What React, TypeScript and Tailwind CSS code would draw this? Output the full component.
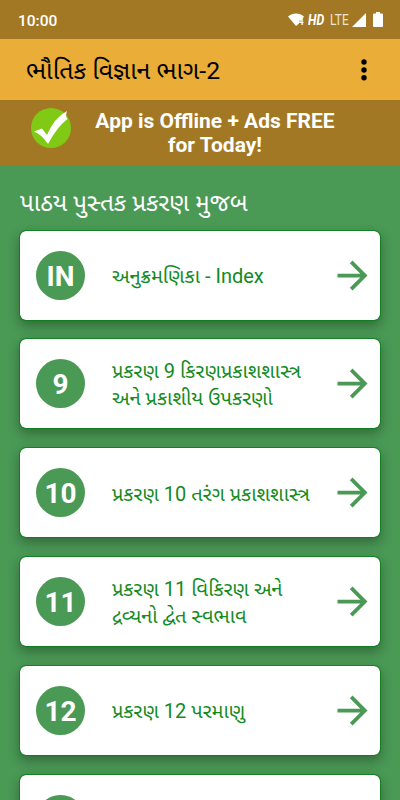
const chapters = [
  { badge: "IN", lines: ["અનુક્રમણિકા - Index"] },
  { badge: "9", lines: ["પ્રકરણ 9 કિરણપ્રકાશશાસ્ત્ર", "અને પ્રકાશીય ઉપકરણો"] },
  { badge: "10", lines: ["પ્રકરણ 10 તરંગ પ્રકાશશાસ્ત્ર"] },
  { badge: "11", lines: ["પ્રકરણ 11 વિકિરણ અને", "દ્રવ્યનો દ્વેત સ્વભાવ"] },
  { badge: "12", lines: ["પ્રકરણ 12 પરમાણુ"] },
  { badge: "", lines: [] },
];

function StatusBar() {
  return (
    <div className="flex h-[39px] shrink-0 items-center justify-between bg-[#a27824] pl-[18px] pr-[17px] text-white">
      <span className="pt-[2px] text-[15.5px] font-medium leading-5">10:00</span>
      <div className="flex items-center">
        <svg className="h-[14px] w-[17px]" viewBox="0 0 17 14">
          <path d="M0 3.4C4.700-.5 11.500-.5 16 3.400l-1 1.600-4 3v2.500L8 13z" fill="currentColor" />
          <text x="10.800" y="11.500" fontSize="8.500" fontWeight="700" fill="currentColor">4</text>
        </svg>
        <span className="ml-[3px] inline-block w-4 text-[14px] font-bold italic leading-4 [transform-origin:left] [transform:scaleX(0.88)]">
          HD
        </span>
        <span className="ml-[6px] inline-block w-[20px] text-[14px] leading-4 text-[#eee5d5] [transform-origin:left] [transform:scaleX(0.85)]">
          LTE
        </span>
        <svg className="ml-[2px] h-[14px] w-[14px]" viewBox="0 0 14 14">
          <path d="M14 0v14H0z" fill="currentColor" />
        </svg>
        <svg className="ml-[7px] h-[15px] w-[10px]" viewBox="0 0 10 15">
          <path d="M3 0h4v1.500h2q1 0 1 1V14q0 1-1 1H1q-1 0-1-1V2.500q0-1 1-1h2z" fill="currentColor" />
        </svg>
      </div>
    </div>
  );
}

export default function App() {
  return (
    <div className="flex h-[800px] w-[400px] flex-col overflow-hidden bg-[#4a9955] font-['Roboto','Noto_Sans_Gujarati','Noto_Sans',sans-serif]">
      <StatusBar />

      {/* App bar */}
      <header className="flex h-[61px] shrink-0 items-center justify-between bg-[#eaad38] pl-[26px] pr-[33px] text-black">
        <h1 className="mt-[2px] whitespace-nowrap text-[24.8px] leading-8">ભૌતિક વિજ્ઞાન ભાગ-2</h1>
        <svg className="h-[22px] w-[6px]" viewBox="0 0 6 22">
          <circle cx="3" cy="3" r="2.7" />
          <circle cx="3" cy="11" r="2.7" />
          <circle cx="3" cy="18.700" r="2.7" />
        </svg>
      </header>

      {/* Offer banner */}
      <section className="flex h-[65px] shrink-0 bg-[#a27824] pl-[31px] pt-2">
        <svg className="h-10 w-10" viewBox="0 0 40 40">
          <circle cx="20" cy="20" r="20" fill="#80c915" />
          <path d="M3 23.500 11 20.500l5 6.500Q23 10 36 3q-2 5 .5 8Q26 19 17 36 10 26 3 23.500z" fill="#fff" />
        </svg>
        <p className="ml-[24px] mt-[1px] w-[240px] whitespace-nowrap text-center text-[21px] font-bold leading-6 text-white">
          App is Offline + Ads FREE
          <br />
          for Today!
        </p>
      </section>

      {/* Chapter list */}
      <main className="px-[19px] pt-5">
        <h2 className="h-[44.7px] whitespace-nowrap pl-px text-[24.300px] leading-[35px] text-white">
          પાઠય પુસ્તક પ્રકરણ મુજબ
        </h2>
        <div className="flex flex-col gap-[17.8px]">
          {chapters.map((chapter, i) => (
            <div
              key={i}
              className="flex h-[91px] items-center rounded-[7px] border border-[#087f18]/80 bg-white bg-clip-padding pl-4 pr-[5px] shadow-[0_5px_12px_rgba(0,0,0,0.3)]"
            >
              <div className="flex h-[49px] w-[49px] shrink-0 items-center justify-center rounded-full bg-[#4a9955] pt-[3px] text-[28px] font-bold text-white">
                {chapter.badge}
              </div>
              <div className="ml-[27px] flex-1 whitespace-nowrap pt-[3px] text-[20px] leading-[27px] text-[#138a22]">
                {chapter.lines.map((line) => (
                  <p key={line}>{line}</p>
                ))}
              </div>
              <svg className="h-[45px] w-[45px] shrink-0" viewBox="0 0 24 24" fill="#4a9955">
                <path d="m12 4-1.410 1.410L16.170 11H4v2h12.170l-5.580 5.590L12 20l8-8z" />
              </svg>
            </div>
          ))}
        </div>
      </main>
    </div>
  );
}
